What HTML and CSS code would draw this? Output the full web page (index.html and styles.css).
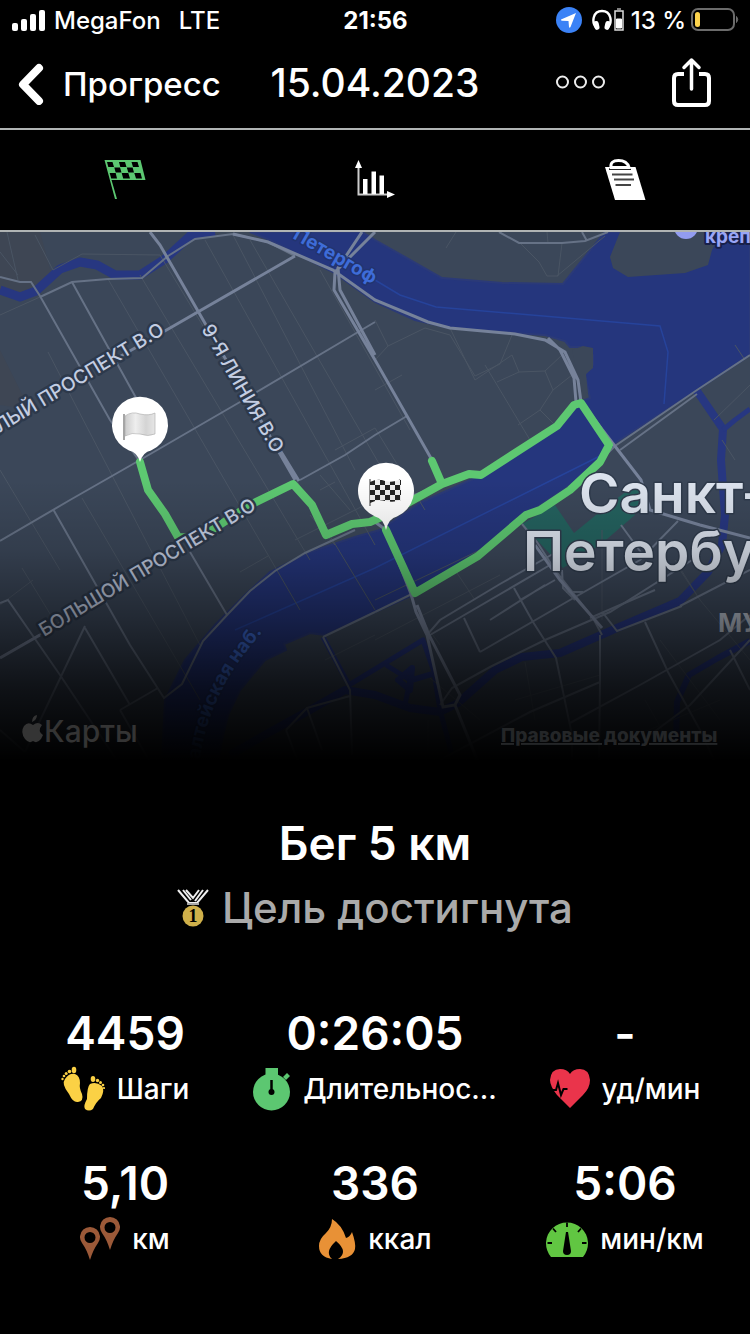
FILE: index.html
```html
<!DOCTYPE html>
<html lang="ru">
<head>
    <meta charset="UTF-8">
    <meta name="viewport" content="width=device-width, initial-scale=1.0">
    <title>Бег 5 км</title>
    <link rel="stylesheet" href="styles.css">
</head>
<body>
    <div class="status-bar">
        <div class="carrier">
            <svg width="33" height="21" viewBox="0 0 33 21" fill="#fff">
                <rect x="0" y="13" width="6" height="8" rx="2"/>
                <rect x="9" y="9" width="6" height="12" rx="2"/>
                <rect x="18" y="4" width="6" height="17" rx="2"/>
                <rect x="27" y="0" width="6" height="21" rx="2"/>
            </svg>
            <span>MegaFon</span>
            <span class="network">LTE</span>
        </div>
        <div class="time">21:56</div>
        <div class="indicators">
            <svg width="26" height="26" viewBox="0 0 26 26">
                <circle cx="13" cy="13" r="13" fill="#3b82f6"/>
                <path d="M20 6 L5 12.5 Q4.500 13.500 6 13.700 L12.500 14 L13 20 Q13.500 21.500 14.500 20 Z" fill="#fff"/>
            </svg>
            <svg class="headphones" width="32" height="24" viewBox="0 0 32 24">
                <path d="M4.500 20 C-1 14 1 3 10 3 C19 3 21 14 15.500 20" fill="none" stroke="#fff" stroke-width="2.400"/>
                <rect x="2" y="13" width="5" height="9" rx="2.500" fill="#fff" transform="rotate(-12 4 17)"/>
                <rect x="13" y="13" width="5" height="9" rx="2.500" fill="#fff" transform="rotate(12 16 17)"/>
                <rect x="23" y="3" width="8" height="19" fill="none" stroke="#ddd" stroke-width="1.500"/>
                <path d="M25 1h4M24.500 11h5v9h-5z" fill="#fff" stroke="#fff"/>
            </svg>
            <span class="percent">13 %</span>
            <svg class="battery" width="48" height="24" viewBox="0 0 48 24">
                <rect x="1" y="1" width="42" height="21" rx="6" fill="none" stroke="#6b6b6b" stroke-width="2"/>
                <path d="M45.500 8.500 Q48 11.500 45.500 14.500z" fill="#6b6b6b" stroke="#6b6b6b"/>
                <rect x="4" y="4" width="5" height="15" rx="2.500" fill="#fcd34c"/>
            </svg>
        </div>
    </div>

    <header class="nav">
        <button class="back">
            <svg width="26" height="42" viewBox="0 0 26 42">
                <path d="M21 5 L5 21.500 L21 38" fill="none" stroke="#fff" stroke-width="8" stroke-linecap="round" stroke-linejoin="round"/>
            </svg>
            Прогресс
        </button>
        <h1 class="date">15.04.2023</h1>
        <div class="actions">
            <button aria-label="Ещё">
                <svg width="50" height="14" viewBox="0 0 50 14" fill="none" stroke="#eee" stroke-width="2">
                    <circle cx="6.500" cy="7" r="5.500"/>
                    <circle cx="24.500" cy="7" r="5.500"/>
                    <circle cx="42.500" cy="7" r="5.500"/>
                </svg>
            </button>
            <button aria-label="Поделиться">
                <svg width="40" height="50" viewBox="0 0 40 50" fill="none" stroke="#fff" stroke-width="4" stroke-linecap="round" stroke-linejoin="round">
                    <path d="M12 17H6Q2 17 2 21V44Q2 48 6 48H33Q37 48 37 44V21Q37 17 33 17H27" stroke-linecap="butt"/>
                    <path d="M19.500 32V3M12 10.500L19.500 3L27 10.500" stroke-width="3.500"/>
                </svg>
            </button>
        </div>
    </header>

    <nav class="tabs">
        <button aria-label="Маршрут">
            <svg width="42" height="42" viewBox="0 0 42 42">
                <path d="M0.500 1H36.500L41.500 21H7.500L13 40H11Z" fill="#5cc771"/>
                <g fill="#000">
                    <path d="M3 3H8.500L10 8H4.300zM15 3H21L22.500 8H16.300zM27.500 3H33.500L35 8H29z"/>
                    <path d="M10.300 8.500H16L17.500 13.500H11.700zM22.800 8.500H28.600L30 13.500H24.300z"/>
                    <path d="M5.700 14H11.700L13 19.500H7.200zM17.700 14H24.300L26 19.500H19.200zM30.300 14H36.500L38 19.500H32z"/>
                </g>
            </svg>
        </button>
        <button aria-label="Графики">
            <svg width="40" height="42" viewBox="0 0 40 42" fill="#fff">
                <path d="M3.500 6V35.500H32" fill="none" stroke="#ccc" stroke-width="2"/>
                <path d="M3.500 1L7 9H0zM40 35.500L32 32V39z"/>
                <rect x="8" y="20" width="4.500" height="15"/>
                <rect x="16.500" y="12.500" width="4.500" height="22.500"/>
                <rect x="24.500" y="16.500" width="4.500" height="18.500"/>
            </svg>
        </button>
        <button aria-label="Заметки">
            <svg width="42" height="42" viewBox="0 0 42 42">
                <path d="M1 8H31.500L41.500 41H11Z" fill="#fff"/>
                <path d="M5 10H27" stroke="#222" stroke-width="2"/>
                <path d="M7 8.500Q6 1.500 14.500 1.500Q23 1.500 25 8.500Z" fill="#000" stroke="#fff" stroke-width="3"/>
                <path d="M8 15.500H28.500M10 20.500H30M11.500 26H27" stroke="#444" stroke-width="2.200"/>
            </svg>
        </button>
    </nav>

    <svg class="map" viewBox="0 232 750 528" role="img" aria-label="Карта маршрута">
        <defs>
            <linearGradient id="fade" x1="0" y1="0" x2="0" y2="1">
                <stop offset="0" stop-color="#000" stop-opacity="0"/>
                <stop offset="0.250" stop-color="#000" stop-opacity="0.140"/>
                <stop offset="0.500" stop-color="#000" stop-opacity="0.430"/>
                <stop offset="0.750" stop-color="#000" stop-opacity="0.760"/>
                <stop offset="1" stop-color="#000"/>
            </linearGradient>
            <linearGradient id="cloth" x1="0" y1="0" x2="1" y2="0">
                <stop offset="0" stop-color="#ccc"/>
                <stop offset="0.350" stop-color="#eee"/>
                <stop offset="0.700" stop-color="#d4d4d4"/>
                <stop offset="1" stop-color="#e6e6e6"/>
            </linearGradient>
            <pattern id="checks" width="10" height="10" x="370" y="480" patternUnits="userSpaceOnUse">
                <rect width="10" height="10" fill="#eee"/>
                <path d="M0 0h5v5h-5zM5 5h5v5h-5z" fill="#222"/>
            </pattern>
        </defs>

        <rect y="232" width="750" height="528" fill="#3b4759"/>
        <path d="M0 232H40L52 276L20 296L0 290zM0 350L30 410L0 405z" fill="#3e4654"/>

        <!-- water -->
        <path class="water" d="M250 232H362L375 240L442 278L502 283L563 284L605 232H750V355L697 390L615 443L609 450L600 462L570 485L525 515L475 555L415 594L375 612L325 635L310 633L284 644L286 650L265 660L240 690L228 715L222 740L218 762H162L165 700L185 660L215 625L245 595L270 572L310 552L355 537L380 530L420 503L475 478L560 424L580 402L590 398L585 375L593 365V355L583 347L570 347L565 341L545 335L515 333L450 328L415 320L375 302L333 272L293 252L270 240Z"/>
        <path d="M620 232L610 257L613 268L628 277L685 273L708 265L712 250L722 232z" fill="#3b4759"/>
        <path d="M583 346L593 348L593 368L586 374L588 394L580 385L572 350z" fill="#3b4759"/>
        <g class="canal">
            <path d="M0 290L20 297L36 291L60 269L80 262L97 265L115 275H140L165 259L190 236L215 232" stroke-width="9"/>
            <path d="M697 391L723 429L721 460L725 515L722 545L708 572L680 601L617 628L560 653L522 657L495 670L458 703L440 712L410 708L375 695L345 690L310 710L270 732L230 755" stroke-width="8"/>
            <path d="M750 409L735 420L723 430M323 637L349 685L423 640L434 672L440 710L452 755M386 665L410 680L405 705" stroke-width="5"/>
            <path d="M750 641L718 658L689 675L677 702L676 740M412 668L398 680L410 690zM412 680L432 674" stroke-width="6"/>
        </g>
        <path d="M375 280L400 295L436 307L660 326L668 352L664 404M235 630L375 568L600 456" fill="none" stroke="#26439b" stroke-width="1.500"/>
        <path d="M522 524L555 505L574 533L602 510L628 490L642 490L635 515L600 545L563 568Z" fill="#24625f"/>

        <!-- minor streets -->
        <g class="minor">
            <path d="M0 252L18 275M35 235L53 270L82 254L160 255M0 315L40 297M7 232L18 280M108 279L300 610M140 275L310 560M160 255L375 610M205 240L375 545M233 235L355 470M250 240L400 500M320 270L410 430M48 352L200 645M82 498L200 700"/>
            <path d="M0 470L60 570M22 568L52 617M0 605L33 580M240 572L268 556M295 540L375 500M310 515L335 545M320 475L350 510M335 450L375 428M320 490L335 482M375 428L425 510M375 320L388 346L375 360M388 346L425 328L450 335L475 376L500 364L512 335"/>
            <path d="M450 328L475 380L512 355L519 372L545 371L562 355M485 365L530 440M497 382L519 372M545 371L553 390L572 375M553 390L540 410L518 425M402 375L375 390M540 410L555 425M446 248L456 232M519 242L539 262L547 276H558L562 243M557 276L605 236M547 232L548 243"/>
            <path d="M375 600L480 550M375 640L500 575M455 570L475 600M440 645L415 610M525 662L535 720M515 700L600 675M602 530L602 620M625 740L720 700M660 640L720 720M680 570L700 600L750 660M700 600L675 560M745 360L735 345M714 420L750 385M722 440L735 460M645 700L665 735M428 720V755M430 678L480 720M325 660L375 635"/>
        </g>

        <!-- streets -->
        <g class="street">
            <path d="M0 277L20 282H31L40 296L110 420L140 462M72 282L140 405L160 440M40 297L72 282L108 279L142 278L168 256L195 239L233 234L268 242L295 256"/>
            <path d="M0 541L70 500L140 460L240 402L375 322M53 509L130 645L164 698L182 684L203 641L228 614L250 591L275 571L305 553L355 530M0 603L8 600L60 675L118 762M190 552L227 615M0 658L85 608M85 626L25 752M120 710L158 688M120 710L150 762M130 705L85 628M0 730L25 752"/>
            <path d="M323 637L350 690L352 755M323 637L375 612M286 730L307 708L350 696M286 730L298 762M307 708L322 750M499 232L519 243H562L585 241L608 232M582 232L587 241"/>
            <path d="M427 635L440 620L500 584L560 550M430 635L550 565M514 588L533 622L556 658L572 735V762M520 600L555 580M464 618L480 652M480 652L570 600L640 560L678 521M440 705L452 688L490 667L545 640L610 612L700 555M490 620L545 585"/>
            <path d="M600 635V682L599 762M600 682L530 712L440 760M645 622L668 672L700 730L715 762M603 613L617 631L682 606M602 635L593 618L555 570L537 542L522 524M621 525L645 558M750 615L720 640L640 685L570 723M590 618L620 605L655 590M680 606L750 570M750 640L690 705L650 735M566 592H583M562 570L563 588L575 600M730 650L750 690"/>
            <path d="M300 480L345 455L375 435L407 416M750 355L697 390L615 446L606 455M697 394L620 450M420 590L375 612M375 520L400 500L470 475"/>
        </g>
        <g class="major">
            <path d="M150 232L160 245L295 480M299 481L280 450M100 368L170 328L295 256"/>
            <path d="M375 232L335 272L334 290L375 360L407 416L432 460M362 232L338 268L340 290L375 355M233 234L268 242L333 270L375 300L428 322L450 328L515 334L545 340L565 352L578 380L581 402M548 338L560 350L574 378L576 402M581 402L641 480L650 510L700 525L750 538M375 522L386 530L411 594L416 612L427 635L443 707L455 705L460 695L429 635L417 605M455 705L478 762"/>
            <path d="M0 658L40 635M535 545L560 580L602 628"/>
        </g>

        <text class="area" transform="translate(292 238) rotate(30)">Петергоф</text>
        <path class="route" d="M140 462L148 490L165 514L178 537L200 538L250 505L293 484L312 505L326 535L352 524L370 522L386 515L442 484L432 461M442 484L469 474L481 475L557 426L574 405L581 403L609 445L600 462L570 490L540 510L526 515L478 556L415 593L386 530"/>

        <g class="road-name">
            <text transform="translate(-12 440) rotate(-31)">АЛЫЙ ПРОСПЕКТ В.О</text>
            <text transform="translate(201 329) rotate(60)">9-Я ЛИНИЯ В.О</text>
            <text transform="translate(44 637) rotate(-31)">БОЛЬШОЙ ПРОСПЕКТ В.О</text>
        </g>
        <path id="embankment" d="M199 772Q204 690 274 620" fill="none"/>
        <text class="area"><textPath href="#embankment">ралтейская наб.</textPath></text>

        <circle cx="686" cy="227" r="12" fill="#929cf0"/>
        <text class="fort" x="705" y="243">крепость</text>
        <text class="city" x="579" y="513">Санкт-</text>
        <text class="city" x="523" y="571">Петербург</text>
        <text class="district" x="718" y="632">МУНИЦИПАЛЬНЫЙ</text>

        <!-- start and finish pins -->
        <path d="M140 462Q137 452 129 450.500A28 28 0 1 1 151 450.500Q143 452 140 462Z" fill="#fff"/>
        <path d="M124 414V440" stroke="#888" stroke-width="1.500"/>
        <path d="M125 416Q132 411 140 414Q149 416 155 413V434Q148 437 140 434Q132 432 125 436Z" fill="url(#cloth)" stroke="#aaa" stroke-width="0.600"/>
        <path d="M386 530Q383 518 375 516.500A28 28 0 1 1 397 516.500Q389 518 386 530Z" fill="#fff"/>
        <path d="M370 479V506" stroke="#777" stroke-width="1.500"/>
        <path d="M370 482Q378 478 385 481Q394 483 401 479V500Q394 503 385 501Q378 499 370 503Z" fill="url(#checks)"/>

        <rect y="480" width="750" height="281" fill="url(#fade)"/>

        <g fill="#343434">
            <path d="M33 725Q28 721 24 726Q20 732 25 739Q29 744 33 741Q37 744 41 739L43 735Q37 731 42 725Q38 721 33 725ZM32 722Q32 716 37 715Q37 720 32 722Z"/>
            <text class="maps-logo" x="44" y="742">Карты</text>
        </g>
        <a href="#legal"><text class="legal" x="501" y="742">Правовые документы</text></a>
    </svg>

    <main class="summary">
        <h2 class="title">Бег 5 км</h2>
        <p class="goal">
            <svg width="32" height="38" viewBox="0 0 32 38">
                <path d="M1 1L12 14H20L31 1M6 1L14 11M9 1L16 9L22 1M26 1L18 12" fill="none" stroke="#eee" stroke-width="2"/>
                <path d="M10 15H22" stroke="#aaa" stroke-width="2"/>
                <circle cx="16" cy="27" r="10.500" fill="#cfb04a"/>
                <text class="medal" x="16" y="33">1</text>
            </svg>
            Цель достигнута
        </p>

        <div class="stats">
            <div class="stat">
                <div class="value">4459</div>
                <div class="label">
                    <svg width="44" height="46" viewBox="0 0 44 46" fill="#fbd145">
                        <path d="M4 13Q8 7 14 8Q19 10 19 17Q18 22 21 28Q23 35 17 36Q12 37 8 28Q0 18 4 13Z"/>
                        <ellipse cx="13" cy="4" rx="2.300" ry="3.200"/>
                        <circle cx="8.500" cy="5.500" r="1.800"/>
                        <circle cx="5.200" cy="7.500" r="1.500"/>
                        <circle cx="3" cy="10" r="1.300"/>
                        <circle cx="1.500" cy="13" r="1.200"/>
                        <path d="M29 18Q35 15 41 20Q44 24 40 32Q35 36 32 43Q28 46 24 43Q22 40 26 33Q26 21 29 18Z"/>
                        <ellipse cx="32" cy="13" rx="2.300" ry="3"/>
                        <circle cx="36.500" cy="14.500" r="1.700"/>
                        <circle cx="39.500" cy="16.500" r="1.500"/>
                        <circle cx="42" cy="19" r="1.300"/>
                        <circle cx="43" cy="22" r="1.100"/>
                    </svg>
                    <span>Шаги</span>
                </div>
            </div>
            <div class="stat">
                <div class="value">0:26:05</div>
                <div class="label">
                    <svg width="38" height="44" viewBox="0 0 38 44">
                        <circle cx="18.500" cy="25" r="18.500" fill="#5cc771"/>
                        <path d="M12.500 1H25V10H12.500zM30 10L34 6L37 9L33 13z" fill="#5cc771"/>
                        <path d="M18.500 13V24" stroke="#000" stroke-width="2.500"/>
                        <circle cx="18.500" cy="25" r="3" fill="#000"/>
                    </svg>
                    <span>Длительнос...</span>
                </div>
            </div>
            <div class="stat">
                <div class="value">-</div>
                <div class="label">
                    <svg width="40" height="42" viewBox="0 0 40 42">
                        <path d="M20 40Q14 34 7 27Q0 18 0 12Q1 1 10 1Q17 1 20 6Q23 1 30 1Q39 1 40 12Q40 20 33 27Q26 34 20 40Z" fill="#ea344b"/>
                        <path d="M2 22H6L8 15L11 27L13.500 21H17.500" fill="none" stroke="#000" stroke-width="2"/>
                    </svg>
                    <span>уд/мин</span>
                </div>
            </div>
            <div class="stat">
                <div class="value">5,10</div>
                <div class="label">
                    <svg width="40" height="44" viewBox="0 0 40 44" fill="#9b5938" fill-rule="evenodd">
                        <path d="M10 43Q7 33 2 26A10 10 0 1 1 18 26Q13 33 10 43ZM10 15A5.500 5.500 0 1 0 10 26A5.500 5.500 0 1 0 10 15Z"/>
                        <path d="M30 33Q27 23 22 16A10 10 0 1 1 38 16Q33 23 30 33ZM30 5A5.500 5.500 0 1 0 30 16A5.500 5.500 0 1 0 30 5Z"/>
                    </svg>
                    <span>км</span>
                </div>
            </div>
            <div class="stat">
                <div class="value">336</div>
                <div class="label">
                    <svg width="38" height="42" viewBox="0 0 38 42">
                        <path d="M14 41Q1 39 1 28Q1 21 8 15Q14 9 14 1Q24 7 28 20Q32 19 34 14Q38 25 37 31Q35 40 20 41Q31 34 18 23Q6 34 14 41Z" fill="#e89136"/>
                    </svg>
                    <span>ккал</span>
                </div>
            </div>
            <div class="stat">
                <div class="value">5:06</div>
                <div class="label">
                    <svg width="42" height="36" viewBox="0 0 42 36">
                        <path d="M5 36A21 21 0 1 1 37 36Z" fill="#61c642"/>
                        <path d="M21 1.500V6M7 7.500L10 11M35 7.500L32 11M1.500 22H6M36 22H40.500" stroke="#000" stroke-width="1.800"/>
                        <path d="M20 11H22L25 30A4 4 0 1 1 17 30Z"/>
                    </svg>
                    <span>мин/км</span>
                </div>
            </div>
        </div>
    </main>
</body>
</html>
```

FILE: styles.css
```css
* {
    box-sizing: border-box;
}
body {
    margin: 0;
    background-color: #000;
    color: #fff;
    font-family: Inter, "Liberation Sans", sans-serif;
    font-weight: 500;
}
button {
    padding: 0;
    border: 0;
    background: none;
    color: inherit;
    font: inherit;
    cursor: pointer;
}
svg {
    display: block;
    flex-shrink: 0;
}

/* status bar */
.status-bar {
    display: grid;
    grid-template-columns: 1fr auto 1fr;
    align-items: center;
    height: 40px;
    padding: 0 11px 0 12px;
    font-size: 24px;
}
.carrier {
    display: flex;
    align-items: center;
    gap: 9px;
}
.network {
    margin-left: 9px;
}
.time {
    font-weight: 700;
}
.indicators {
    display: flex;
    align-items: center;
    justify-content: flex-end;
}
.headphones {
    margin: 0 7px 0 10px;
}
.battery {
    margin-left: 5px;
}

/* navigation */
.nav {
    display: grid;
    grid-template-columns: 1fr auto 1fr;
    align-items: center;
    height: 90px;
    padding: 0 18px 4px;
    border-bottom: 2px solid #b0b4b4;
}
.back {
    display: flex;
    align-items: center;
    gap: 19px;
    padding-top: 3px;
    font-size: 33px;
}
.date {
    margin: 0;
    font-size: 39px;
    font-weight: 500;
}
.actions {
    display: flex;
    align-items: center;
    justify-content: flex-end;
    gap: 66px;
    padding-right: 20px;
}
.tabs {
    display: grid;
    grid-template-columns: repeat(3, 1fr);
    height: 102px;
    border-bottom: 2px solid #b0b4b4;
}
.tabs button {
    display: flex;
    align-items: center;
    justify-content: center;
}

/* map */
.map {
    width: 100%;
    height: auto;
}
.water {
    fill: #25367d;
    stroke: #2b3a78;
    stroke-width: 2;
}
.canal {
    fill: none;
    stroke: #273781;
    stroke-linejoin: round;
}
.minor {
    fill: none;
    stroke: #4a5564;
    stroke-width: 1;
}
.street {
    fill: none;
    stroke: #667286;
    stroke-width: 2;
}
.major {
    fill: none;
    stroke: #76829a;
    stroke-width: 3;
}
.route {
    fill: none;
    stroke: #5dc871;
    stroke-width: 8;
    stroke-linecap: round;
    stroke-linejoin: round;
}
.map text {
    paint-order: stroke;
    stroke-linejoin: round;
}
.road-name {
    fill: #c3cde2;
    stroke: #2d394b;
    stroke-width: 5;
    font-size: 19px;
}
.area {
    fill: #3e6cd8;
    stroke: #22346f;
    stroke-width: 3;
    font-size: 19px;
    font-weight: 700;
}
.fort {
    fill: #99a5f5;
    stroke: #18204a;
    stroke-width: 4;
    font-size: 19px;
    font-weight: 700;
}
.city {
    fill: #dce3ee;
    stroke: #2f3b4c;
    stroke-width: 3;
    font-size: 55px;
    font-weight: 600;
}
.district {
    fill: #b5bdc9;
    font-size: 26px;
    font-weight: 700;
}
.maps-logo {
    font-size: 30px;
    font-weight: 500;
}
.legal {
    fill: #242628;
    font-size: 19px;
    font-weight: 800;
    text-decoration: underline;
}

/* workout summary */
.summary {
    padding: 53px 0 60px;
}
.title {
    margin: 0 0 7px;
    font-size: 46px;
    font-weight: 600;
    line-height: 60px;
    text-align: center;
}
.goal {
    display: flex;
    align-items: center;
    justify-content: center;
    gap: 13px;
    margin: 0 0 69px;
    color: #aaa;
    font-size: 42px;
    line-height: 56px;
}
.medal {
    fill: #000;
    font-family: "Liberation Serif", serif;
    font-size: 18px;
    font-weight: 700;
    text-anchor: middle;
}
.stats {
    display: grid;
    grid-template-columns: repeat(3, 1fr);
    row-gap: 44px;
}
.value {
    margin-bottom: 6px;
    font-size: 46px;
    font-weight: 600;
    line-height: 56px;
    text-align: center;
}
.label {
    display: flex;
    align-items: center;
    justify-content: center;
    gap: 12px;
    height: 44px;
    font-size: 28px;
    white-space: nowrap;
}
```
